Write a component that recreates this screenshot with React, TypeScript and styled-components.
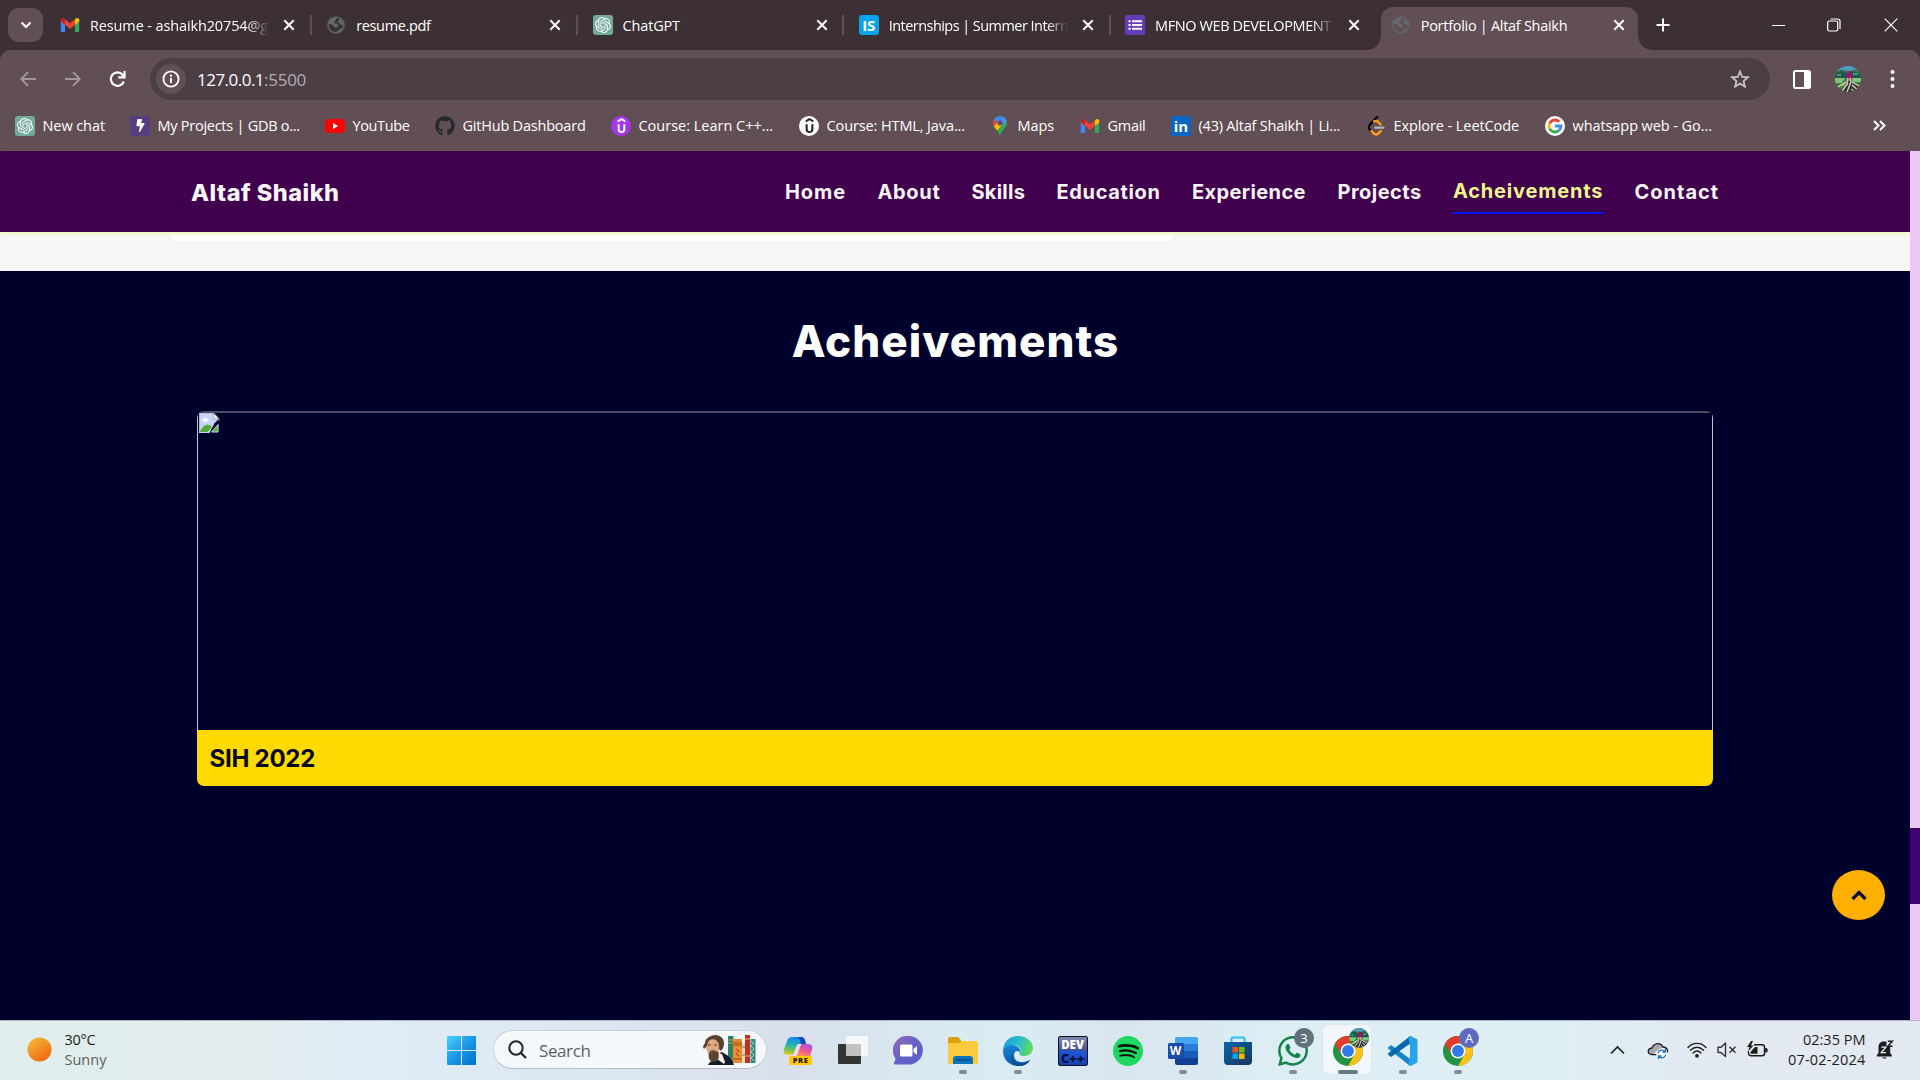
import React from "react";
import styled, { createGlobalStyle, css } from "styled-components";
import { SiOpenai, SiUdemy, SiSpotify } from "react-icons/si";
import { FaGithub, FaBolt, FaWhatsapp } from "react-icons/fa";

const GlobalStyle = createGlobalStyle`
  * { box-sizing: border-box; }
  html, body { margin: 0; padding: 0; }
  body { overflow: hidden; background: #00002c; }
  svg { display: block; flex: none; }
`;

const ui = `"Open Sans", "Noto Sans", sans-serif`;
const brand = `Inter, "Open Sans", sans-serif`;

const Screen = styled.div`
  width: 1920px;
  height: 1080px;
  display: flex;
  flex-direction: column;
  overflow: hidden;
  font-family: ${ui};
`;

const Label = styled.span<{ $ls?: number }>`
  letter-spacing: ${(p) => p.$ls ?? 0}px;
  white-space: nowrap;
`;

/* ---------- browser window ---------- */

const TabStrip = styled.div`
  height: 50px;
  flex: none;
  display: flex;
  align-items: flex-start;
  padding-left: 8px;
  background: #3c3034;
  color: #fff;
`;

const TabSearch = styled.button`
  width: 35px;
  height: 34px;
  margin: 8px 2.5px 0 0;
  padding: 0;
  border: 0;
  border-radius: 11px;
  background: #624f55;
  display: grid;
  place-items: center;
`;

const Tab = styled.div<{ $active?: boolean; $last?: boolean }>`
  width: 266.25px;
  height: 50px;
  flex: none;
  display: flex;
  align-items: center;
  position: relative;
  padding-left: 14.5px;
  font-size: 14.5px;
  border-right: 2px solid transparent;
  ${(p) =>
    !p.$active &&
    !p.$last &&
    css`
      background: linear-gradient(#624f55, #624f55) no-repeat right -2px center / 2px 20px;
      background-origin: padding-box;
    `}
  ${(p) =>
    p.$active &&
    css`
      width: 257px;
      height: 43px;
      margin: 7px 0 0 4px;
      padding: 0 0 7px 10px;
      border: 0;
      border-radius: 12px 12px 0 0;
      background: #624f55;
      &::before,
      &::after {
        content: "";
        position: absolute;
        bottom: 0;
        width: 14px;
        height: 14px;
      }
      &::before {
        left: -14px;
        background: radial-gradient(circle at 0 0, transparent 13.5px, #624f55 14px);
      }
      &::after {
        right: -14px;
        background: radial-gradient(circle at 100% 0, transparent 13.5px, #624f55 14px);
      }
    `}
`;

const TabTitle = styled.div<{ $fade?: boolean; $active?: boolean }>`
  width: ${(p) => (p.$active ? 190 : 179)}px;
  margin: 0 ${(p) => (p.$active ? 0 : 12)}px 0 10px;
  padding-top: 1px;
  line-height: 24px;
  white-space: nowrap;
  ${(p) => p.$fade && css`mask-image: linear-gradient(90deg, #000 158px, transparent 179px);`}
`;

const NewTab = styled.div`
  width: 25px;
  height: 50px;
  margin-left: 13px;
  display: grid;
  place-items: center;
`;

const WindowControls = styled.div`
  margin-left: auto;
  height: 50px;
  display: flex;
`;

const ControlButton = styled.div<{ $w?: number }>`
  width: ${(p) => p.$w ?? 56}px;
  display: grid;
  place-items: center;
`;

const ToolbarBack = styled.div`
  background: #3c3034;
  flex: none;
`;

const Toolbar = styled.div`
  height: 101px;
  border-radius: 10px 10px 0 0;
  background: #624f55;
  color: #fff;
`;

const AddressRow = styled.div`
  height: 58px;
  padding-top: 8px;
  display: flex;
`;

const NavButton = styled.div<{ $w: number }>`
  width: ${(p) => p.$w}px;
  height: 42px;
  flex: none;
  display: grid;
  place-items: center;
`;

const Omnibox = styled.div`
  width: 1620px;
  height: 42px;
  flex: none;
  margin-left: 5px;
  border-radius: 21px;
  background: #4c3e45;
  display: flex;
  align-items: center;
  padding: 0 20px 0 6px;
  font-size: 17px;
`;

const InfoBadge = styled.div`
  width: 30px;
  height: 30px;
  margin-right: 11px;
  border-radius: 50%;
  background: #624f55;
  display: grid;
  place-items: center;
`;

const Port = styled(Label)`
  color: #b5abb0;
`;

const Push = styled.div`
  flex: 1;
`;

const BookmarksBar = styled.div`
  height: 43px;
  display: flex;
  align-items: center;
  padding: 0 0 8px 15px;
  font-size: 14.5px;
`;

const Bookmark = styled.div<{ $w: number }>`
  width: ${(p) => p.$w}px;
  flex: none;
  display: flex;
  align-items: center;
  gap: 7.5px;
`;

const Tile = styled.span<{ $bg: string; $fg?: string; $r?: number; $size?: number }>`
  width: 20px;
  height: 20px;
  flex: none;
  border-radius: ${(p) => p.$r ?? 0}px;
  background: ${(p) => p.$bg};
  color: ${(p) => p.$fg ?? "#fff"};
  display: grid;
  place-items: center;
  font: 700 ${(p) => p.$size ?? 14}px/20px ${ui};
`;

/* ---------- portfolio page ---------- */

const Viewport = styled.div`
  height: 869px;
  flex: none;
  display: flex;
`;

const Page = styled.div`
  width: 1910px;
  display: flex;
  flex-direction: column;
  background: #00002c;
`;

const ScrollTrack = styled.div`
  width: 10px;
  padding-top: 677px;
  position: relative;
  background: #ecc8f4;
`;

const ScrollThumb = styled.div`
  height: 76px;
  background: #420075;
`;

const SiteHeader = styled.header`
  height: 81px;
  flex: none;
  display: flex;
  justify-content: space-between;
  align-items: center;
  padding: 0 191px;
  position: relative;
  background: #40004d;
  box-shadow: 0 3px 4px -1px #eff7b8;
  color: #fbf6fb;
  font-family: ${brand};
`;

const Brand = styled.div`
  font-size: 23.5px;
  font-weight: 800;
  line-height: 30px;
  padding-top: 2px;
`;

const Menu = styled.nav`
  display: flex;
  gap: 31.5px;
`;

const MenuLink = styled.a<{ $w: number; $ls: number; $active?: boolean }>`
  width: ${(p) => p.$w}px;
  height: 44px;
  font-size: 20px;
  font-weight: 700;
  line-height: 44px;
  letter-spacing: ${(p) => p.$ls}px;
  white-space: nowrap;
  ${(p) =>
    p.$active &&
    css`
      color: #f0f78e;
      line-height: 42px;
      border-bottom: 2px solid #0018ff;
    `}
`;

const PreviousSection = styled.div`
  height: 39px;
  flex: none;
  padding-left: 172px;
  background: #f7f7f7;
`;

const PreviousCard = styled.div`
  width: 1000px;
  height: 9px;
  background: #fff;
`;

const Section = styled.section`
  flex: 1;
  display: flex;
  flex-direction: column;
  align-items: center;
  position: relative;
  font-family: ${brand};
`;

const Heading = styled.h2`
  margin: 41px 0 0 1px;
  color: #fff;
  font-size: 44px;
  line-height: 58px;
  font-weight: 800;
  letter-spacing: 1.05px;
`;

const AwardCard = styled.article`
  width: 1516px;
  height: 375px;
  margin-top: 41px;
  border-radius: 7px;
  overflow: hidden;
  display: flex;
  flex-direction: column;
`;

const AwardImage = styled.div`
  height: 319px;
  padding-left: 1px;
  border: 1px solid #c4c4cc;
  border-top: 2px solid #4b4a67;
  border-bottom: 0;
  border-radius: 3px 3px 0 0;
`;

const AwardTitle = styled.div`
  height: 56px;
  padding-left: 12.5px;
  background: #ffd900;
  color: #060614;
  font-size: 24px;
  font-weight: 700;
  line-height: 57px;
`;

const BackToTop = styled.button`
  position: absolute;
  left: 1832px;
  top: 599px;
  width: 53px;
  height: 50px;
  border: 0;
  padding: 1px 0 0;
  border-radius: 50%;
  background: #ffaf00;
  display: grid;
  place-items: center;
`;

/* ---------- taskbar ---------- */

const Taskbar = styled.footer`
  height: 60px;
  flex: none;
  display: flex;
  border-top: 1px solid #b5b9c6;
  background: linear-gradient(90deg, #dfeeec 0, #e3ecec 220px, #e0ecf5 370px, #dde8f3 560px, #d8e0ec 790px, #d9e8f0 910px, #daedf3 1010px, #d9e5ef 1120px, #dceef4 1280px, #deeff4 1560px, #e2e9f1 1700px, #e3e9f1 100%);
  color: #1c1c1c;
`;

const Weather = styled.div`
  width: 440px;
  display: flex;
  align-items: center;
  padding: 0 0 2px 27px;
  gap: 12.5px;
`;

const TwoLines = styled.div<{ $right?: boolean }>`
  display: flex;
  flex-direction: column;
  align-items: ${(p) => (p.$right ? "flex-end" : "flex-start")};
  font-size: 14.5px;
  line-height: 20px;
`;

const Muted = styled(Label)`
  color: #5c6163;
`;

const StartButton = styled.div`
  width: 53px;
  padding: 15px 0 0 7px;
`;

const SearchBox = styled.div`
  width: 274px;
  height: 39px;
  flex: none;
  margin: 9px 3px 0 0;
  display: flex;
  align-items: center;
  padding: 0 10px 0 14px;
  border: 1px solid #c9d3e0;
  border-bottom-color: #b2bccb;
  border-radius: 20px;
  background: #f5f9fc;
  font-size: 17px;
`;

const SearchText = styled(Muted)`
  flex: 1;
  padding: 1px 0 0 12px;
`;

const AppButton = styled.div<{ $active?: boolean }>`
  width: 55px;
  height: 59px;
  flex: none;
  display: flex;
  flex-direction: column;
  align-items: center;
  padding-top: 15px;
  position: relative;
  &::before {
    content: "";
    position: absolute;
    left: 3px;
    top: 4px;
    width: 48px;
    height: 49px;
    border-radius: 5px;
    background: ${(p) => (p.$active ? "#f1f7fa" : "transparent")};
    box-shadow: ${(p) => (p.$active ? "0 0 1px #b9c4cc" : "none")};
  }
  > svg { position: relative; }
`;

const RunDot = styled.span<{ $wide?: boolean }>`
  width: ${(p) => (p.$wide ? 20 : 8)}px;
  height: 4px;
  margin-top: 4px;
  border-radius: 2px;
  position: relative;
  background: ${(p) => (p.$wide ? "#667a86" : "#858b91")};
`;

const CountBadge = styled.span<{ $bg: string }>`
  position: absolute;
  left: 29px;
  top: 7px;
  width: 20px;
  height: 20px;
  border-radius: 50%;
  background: ${(p) => p.$bg};
  color: #fff;
  font-size: 13px;
  line-height: 20px;
  text-align: center;
  overflow: hidden;
`;

const PreTag = styled.span`
  position: absolute;
  left: 19px;
  top: 35px;
  width: 23px;
  height: 9px;
  border-radius: 2px;
  background: #ffc800;
  color: #1b1400;
  font-size: 7.5px;
  font-weight: 800;
  line-height: 9px;
  letter-spacing: 0.6px;
  text-align: center;
`;

const DevTile = styled.div`
  width: 30px;
  height: 30px;
  border: 1.5px solid #10131f;
  border-radius: 2px;
  background: linear-gradient(#8388ad 0, #4c5592 45%, #1c57d8 52%, #173fae 100%);
  color: #fff;
  font-size: 11.5px;
  font-weight: 800;
  line-height: 15px;
  text-align: center;
  white-space: nowrap;
`;

const DevSub = styled.div`
  color: #04103a;
  font-size: 13px;
  line-height: 12px;
`;

const Tray = styled.div`
  margin-left: auto;
  width: 310px;
  display: flex;
  align-items: center;
  padding-bottom: 1px;
`;

const TraySlot = styled.div<{ $w: number }>`
  width: ${(p) => p.$w}px;
  flex: none;
`;

/* ---------- drawings ---------- */

const Gmail = () => (
  <svg width="20" height="20" viewBox="0 0 20 20">
    <path d="M.8 5v10.700q0 1.300 1.200 1.300H5V8z" fill="#4285f4" />
    <path d="M19.200 5v10.700q0 1.300-1.200 1.300h-3V8z" fill="#34a853" />
    <path d="M15 4.300 16.300 3.300c1.200-.9 2.900-.1 2.900 1.500V6.500L15 9.800z" fill="#fbbc04" />
    <path d="M5 4.300 3.700 3.300C2.500 2.400.8 3.200.8 4.800V6.500L5 9.800z" fill="#c5221f" />
    <path d="M5 4.300 10 8.200l5-3.900v5.500l-5 3.900-5-3.900z" fill="#ea4335" />
  </svg>
);

const Globe = () => (
  <svg width="20" height="20" viewBox="0 0 20 20">
    <circle cx="10" cy="10" r="8" fill="none" stroke="#5d6569" strokeWidth="1.700" />
    <path d="M2.500 8.500C4 4 7 2.500 10.500 2.500c1 1-.5 2-1 2.500.5 1-.5 1.500-1.500 2 0 1.500 1 1.500 2.500 1.500 1.500 0 2 1 1.500 2.500s-2 1.500-3 1.500-1-2-2.500-2.500S4 9 2.500 8.500zM13 4c2.500 1 4 3 4.300 6-1 .8-2 .5-2.500-.5S12.500 8 12 7s1-1 1-3zM11 17.500c0-2 1.500-2.500 3-3.500 1-.8 2-1 2.500-.5-1 2.500-3 4-5.500 4z" fill="#626a6e" />
  </svg>
);

const OpenAI = () => (
  <Tile $bg="#74aa9c" $r={3}>
    <SiOpenai size={16} />
  </Tile>
);

const FormsIcon = () => (
  <svg width="20" height="20" viewBox="0 0 20 20">
    <rect width="20" height="20" rx="1.500" fill="#673ab7" />
    <path d="M3.500 5.200h2.200v2H3.500zM3.500 9h2.200v2H3.500zM3.500 12.800h2.200v2H3.500zM7 5.200h10v2H7zM7 9h10v2H7zM7 12.800h10v2H7z" fill="#fff" />
  </svg>
);

const Cross = () => (
  <svg width="16" height="16" viewBox="0 0 16 16">
    <path d="m3.300 3.300 9.400 9.400m0-9.400-9.400 9.400" stroke="#fff" strokeWidth="2" />
  </svg>
);

const YouTube = () => (
  <svg width="20" height="20" viewBox="0 0 20 20">
    <rect y="3" width="20" height="14" rx="3.500" fill="#f00" />
    <path d="m8 7 5.200 3L8 13z" fill="#fff" />
  </svg>
);

const MapsPin = () => (
  <svg width="20" height="20" viewBox="0 0 20 20">
    <defs>
      <clipPath id="pin">
        <path d="M10 0a7 7 0 0 0-7 7c0 5 5.500 6.500 7 13 1.500-6.500 7-8 7-13a7 7 0 0 0-7-7z" />
      </clipPath>
    </defs>
    <g clipPath="url(#pin)">
      <path d="M0 0h20v20H0z" fill="#34a853" />
      <path d="M3 14 17-2 5-2 2 9z" fill="#4285f4" />
      <path d="M2 2 8 7 3 12z" fill="#ea4335" />
      <path d="M3 11 8 6l4 3-6 7z" fill="#fbbc04" />
      <path d="m10 7 4-6 4 3-6 6z" fill="#4c8df6" />
    </g>
    <circle cx="10" cy="7" r="2.500" fill="#624f55" />
  </svg>
);

const LeetCode = () => (
  <svg width="20" height="20" viewBox="0 0 24 24">
    <path d="M13.500 1 5 10c-2 2-2 5 0 7l2 2.200" fill="none" stroke="#050505" strokeWidth="2.800" strokeLinecap="round" />
    <path d="m17.500 10-3-3c-1.300-1.200-3.200-1.400-4.700-.6M6.500 18l2.500 2.800c1.700 1.800 4.500 1.800 6 0l2.800-2.800" fill="none" stroke="#ffa116" strokeWidth="2.800" strokeLinecap="round" />
    <path d="M11 14h10" stroke="#b3b3b3" strokeWidth="2.600" strokeLinecap="round" />
  </svg>
);

const GoogleG = () => (
  <svg width="20" height="20" viewBox="0 0 20 20">
    <circle cx="10" cy="10" r="10" fill="#fff" />
    <g fill="none" strokeWidth="2.800">
      <path d="M14.200 5.800A6 6 0 0 0 4.600 7.300" stroke="#ea4335" />
      <path d="M4.600 7.300a6 6 0 0 0 0 5.400" stroke="#fbbc05" />
      <path d="M4.600 12.700a6 6 0 0 0 9.200 1.900" stroke="#34a853" />
      <path d="M13.800 14.600A6 6 0 0 0 16 10h-6" stroke="#4285f4" />
    </g>
  </svg>
);

const Avatar = ({ size }: { size: number }) => (
  <svg width={size} height={size} viewBox="0 0 26 26">
    <defs>
      <clipPath id={`av${size}`}>
        <circle cx="13" cy="13" r="13" />
      </clipPath>
    </defs>
    <g clipPath={`url(#av${size})`}>
      <path d="M0 0h26v26H0z" fill="#3f7d4c" />
      <path d="M0 0h26v5l-6-2-5 3-6-2-9 3z" fill="#4a9cc0" />
      <path d="m0 7 6-3 5 3 6-2 9 2v5H0z" fill="#1d5a49" />
      <path d="M2 8h4v2H2zM18 7h5v2h-5z" fill="#3f9a86" />
      <path d="M0 12h10l-3 5H0zM17 12h9v4h-8z" fill="#7dc878" />
      <path d="M4 26 14 15l12 5v6z" fill="#3a3436" />
      <path d="m3 21 8-5m-4 9 6-8m-1 9 4-10m8 4-7-4m7 9-7-6" stroke="#d6d9cb" strokeWidth="1.300" />
      <path d="m6 20 4-2m6 5 3 2" stroke="#c9c24a" strokeWidth="1.300" />
      <path d="M12.500 5h3l2 7.500h-6z" fill="#a3106f" />
      <path d="m13 12-1 5m3-5 1 4" stroke="#efb3b8" strokeWidth="1.500" />
    </g>
  </svg>
);

const BrokenImage = () => (
  <svg width="21" height="20" viewBox="0 0 22 21">
    <path d="M0 0h15l6 6-5 5-5 10H0z" fill="#c7d6f7" />
    <path d="M0 0h15l6 6v2M.5 20V.5" stroke="#aeb3c0" fill="none" />
    <path d="M15 0v6h6z" fill="#f7f8fc" stroke="#8f96a6" strokeWidth=".8" />
    <path d="M3.500 8c0-2 2-2 2.500-3 2-.5 3 .5 3 2 1.500 0 1.500 2 0 2h-4Q3.500 9 3.500 8z" fill="#fff" />
    <path d="M1 20c2-6 6-8 9-7.500 2 0 3 1 3.500 2.500L9 20z" fill="#56ad35" />
    <path d="m13 20 7-8v8z" fill="#63a94c" stroke="#d2d8e5" strokeWidth="1" />
  </svg>
);

const WindowsLogo = () => (
  <svg width="29" height="29" viewBox="0 0 29 29">
    <defs>
      <linearGradient id="win" gradientUnits="userSpaceOnUse" x1="0" y1="0" x2="29" y2="29">
        <stop stopColor="#4cd2ff" />
        <stop offset=".5" stopColor="#1a96e2" />
        <stop offset="1" stopColor="#006fd0" />
      </linearGradient>
    </defs>
    <path d="M1 0h13v14H0V1q0-1 1-1zM15 0h13q1 0 1 1v13H15zM0 15h14v14H1q-1 0-1-1zM15 15h14v13q0 1-1 1H15z" fill="url(#win)" />
  </svg>
);

const SearchArt = () => (
  <svg width="53" height="30" viewBox="0 0 53 30">
    <path d="M25 1h5.500v27H25z" fill="#2b8266" />
    <path d="M25 5h5.500M25 8h5.500M25 24h5.500" stroke="#c9b45c" strokeWidth=".8" />
    <path d="M30 4h9v24h-9z" fill="#ed8b34" />
    <path d="M30 8h9m-9 2h9m-9 14h9m-6-10 3 2-3 3 3 2" stroke="#a14d13" fill="none" />
    <path d="M39 8h3v20h-3z" fill="#eadaaf" />
    <path d="M39 12h3m-3 8h3" stroke="#4d8a5d" />
    <path d="M42 0h5v28h-5z" fill="#bd3027" />
    <path d="M42 4h5m-5 17h5" stroke="#e7b14b" />
    <path d="M47.500 4h5v24h-5z" fill="#2a8b8b" />
    <path d="m48 6 3 2-3 3 3 3-3 3 3 3-3 3 3 3" stroke="#d7c680" fill="none" />
    <path d="M5 30c1-3 4-4 6-5l7-8c6 2 11 6 13 13z" fill="#171b2a" />
    <path d="m15 18 4 1 3 8-1 2-7-5z" fill="#f3eee6" />
    <path d="M4 5c4-4 11-3 13 2l-1 12-5 3-6-3-2-6z" fill="#e0aa85" />
    <path d="M1 14C-1 11 1 10 2 8 2 3 8 0 13 0c5 .5 8 4 8 8 0 3-1 6-3 8l-2-2c0-4 0-6-2-8-2-2-5-2-7-1C4 7 5 11 3 12z" fill="#5b4230" />
    <path d="M6 18c2-2 6-2 9-1 2 5 0 10-4 10-5 0-6-5-5-9z" fill="#5a4330" />
    <path d="M5 10h3m3 0h3M7 16.500q3-1.500 6 0" stroke="#54392a" fill="none" strokeWidth="1.200" />
  </svg>
);

const Copilot = () => (
  <svg width="30" height="30" viewBox="0 0 30 30">
    <defs>
      <linearGradient id="cpa" x1=".5" y1="0" x2=".3" y2="1">
        <stop stopColor="#1387e6" />
        <stop offset=".45" stopColor="#25b1b5" />
        <stop offset=".75" stopColor="#75c34b" />
        <stop offset="1" stopColor="#f2cb20" />
      </linearGradient>
      <linearGradient id="cpb" x1=".8" y1="0" x2=".3" y2="1">
        <stop stopColor="#a657ee" />
        <stop offset=".5" stopColor="#e8558f" />
        <stop offset="1" stopColor="#ff9a4b" />
      </linearGradient>
    </defs>
    <path d="M9 1h9c3 0 4 2 5 7h-7c-3 0-4 7-6 11H5c-4 0-5-2-4-6L4 5q1.500-4 5-4z" fill="url(#cpa)" />
    <path d="M15 1h3c3 0 4 2 5 7h-5c-1-3-1-5-3-7z" fill="#1646c7" />
    <path d="M17 8h8c4 0 5 3 4 6l-2 6H11c3-2 3-12 6-12z" fill="url(#cpb)" />
    <path d="M16 8h3c-3 2-3 10-6 12h-3c3-3 3-12 6-12z" fill="#eadcf5" />
  </svg>
);

const TaskView = () => (
  <svg width="30" height="30" viewBox="0 0 30 30">
    <rect x="0" y="8" width="23" height="20" rx="1" fill="#343434" />
    <rect x="8" y="0" width="22" height="20" rx="1" fill="#f7f7f8" />
    <path d="M8 8h15v12H8z" fill="#bfc1c2" />
  </svg>
);

const Teams = () => (
  <svg width="30" height="30" viewBox="0 0 30 30">
    <defs>
      <linearGradient id="tm" x1="0" y1="0" x2="1" y2="1">
        <stop stopColor="#9a68b5" />
        <stop offset=".5" stopColor="#6661c5" />
        <stop offset="1" stopColor="#5a5dcc" />
      </linearGradient>
    </defs>
    <path d="M15 0a14.300 14.300 0 1 1-1 28.500H2q-2-.5-.5-2.500l1-3.500A14.300 14.300 0 0 1 15 0z" fill="url(#tm)" />
    <rect x="7" y="8.500" width="12.500" height="12" rx="1.500" fill="#fff" />
    <path d="m20.500 13 3.500-3v9l-3.500-3z" fill="#fff" />
  </svg>
);

const Explorer = () => (
  <svg width="30" height="30" viewBox="0 0 30 30">
    <path d="M0 3q0-2 2-2h8l3 3v6H0z" fill="#dca007" />
    <path d="M0 7h11l3-2h14q2 0 2 2v19q0 2-2 2H0z" fill="#fccb3d" />
    <path d="M5 28v-5q0-3 3-3h14q3 0 3 3v5z" fill="#0d73bd" />
    <path d="M8 24h14" stroke="#083f78" strokeWidth="1.200" />
  </svg>
);

const Edge = () => (
  <svg width="30" height="30" viewBox="0 0 30 30">
    <defs>
      <linearGradient id="eg1" x1="0" y1=".3" x2="1" y2=".5">
        <stop stopColor="#1b9fde" />
        <stop offset=".5" stopColor="#27bdca" />
        <stop offset="1" stopColor="#65dd55" />
      </linearGradient>
      <linearGradient id="eg2" x1="0" y1="0" x2="0" y2="1">
        <stop stopColor="#1684d7" />
        <stop offset="1" stopColor="#0b5ba7" />
      </linearGradient>
    </defs>
    <path d="M0 14C1 4 8 0 15 0c9 0 15 6 15 12 0 5-4 8-9 8-3 0-5-1-4.500-2.500C19 15 17 9 11 9 5 9 1 12 0 14z" fill="url(#eg1)" />
    <path d="M0 14c2-4 6-5.500 10-5 5 .5 8 4 7 7.500C13 12 9 18 12 23c3 4 9 4 15 1-4 6-9 6-13 6C5 29 0 23 0 14z" fill="url(#eg2)" />
    <path d="M12 13c-4 3-4 10 1 13.500 5 2 10 1 14.500-3-2 4-7 7-12.500 6.500C8 28 6 18 12 13z" fill="#0a4b8c" />
  </svg>
);

const Word = () => (
  <svg width="30" height="30" viewBox="0 0 30 30">
    <path d="M7 3q0-2 2-2h19q2 0 2 2v5H7z" fill="#43a6ee" />
    <path d="M7 8h23v7H7z" fill="#2b7cd8" />
    <path d="M7 15h23v7H7z" fill="#185abd" />
    <path d="M7 22h23v5q0 2-2 2H9q-2 0-2-2z" fill="#103f91" />
    <rect y="7" width="16" height="16" rx="1.500" fill="#174ba6" />
  </svg>
);

const WordLetter = styled.span`
  position: absolute;
  left: 13px;
  top: 22px;
  width: 15px;
  color: #fff;
  text-align: center;
  font-weight: 700;
  font-size: 12px;
  line-height: 16px;
`;

const Store = () => (
  <svg width="30" height="30" viewBox="0 0 30 30">
    <defs>
      <linearGradient id="st" x1="0" y1="0" x2="1" y2="1">
        <stop stopColor="#0764ad" />
        <stop offset="1" stopColor="#1c3558" />
      </linearGradient>
    </defs>
    <path d="M8.500 7V3q0-1.500 1.500-1.500h10q1.500 0 1.500 1.500v4" fill="none" stroke="#29bdf0" strokeWidth="2" />
    <path d="M1 6h28v19q0 4-4 4H5q-4 0-4-4z" fill="url(#st)" />
    <path d="M9.500 11H15v5.500H9.500z" fill="#f25022" />
    <path d="M16 11h5.500v5.500H16z" fill="#7fba00" />
    <path d="M9.500 17.500H15V23H9.500z" fill="#00a4ef" />
    <path d="M16 17.500h5.500V23H16z" fill="#ffb900" />
  </svg>
);

const Spotify = () => (
  <svg width="30" height="30" viewBox="0 0 30 30">
    <circle cx="15" cy="15" r="12" fill="#07140b" />
    <SiSpotify size={30} color="#1ed760" />
  </svg>
);

const Chrome = () => (
  <svg width="30" height="30" viewBox="2 2 44 44">
    <circle cx="24" cy="24" r="22" fill="#229342" />
    <path d="M24 2A22 22 0 0 0 4.950 13L14.500 29.500 24 13H43.050A22 22 0 0 0 24 2" fill="#e33b2e" />
    <path d="M43.050 13H24l9.500 16.500L24 46A22 22 0 0 0 43.050 13" fill="#fbc116" />
    <circle cx="24" cy="24" r="11" fill="#fff" />
    <circle cx="24" cy="24" r="8.700" fill="#2f7bea" />
  </svg>
);

const VSCode = () => (
  <svg width="30" height="30" viewBox="0 0 30 30">
    <path d="M0 11.500 3 9l20 14.500V30q-1 0-2-1L.5 13q-.8-.7-.5-1.500z" fill="#1485cd" />
    <path d="M0 18.500Q-.3 17.700.5 17L21 1q1-1 2-1v7L3 21z" fill="#0768ad" />
    <path d="m22.500 0 7 3.500v23l-7 3.500q-1.500 0-2.500-1.500l2-6V8l-2-6.500Q21 0 22.500 0z" fill="#27a3ec" />
  </svg>
);

const Cloud = () => (
  <svg width="22" height="20" viewBox="0 0 22 20">
    <path d="M5 14.500c-5 0-5-6 0-6.500 2-5.500 9-6 11-1 4 0 5 3 4.500 5.500-.5 1.500-1 2-2.500 2z" fill="#a7a9ab" stroke="#1c1c1c" strokeWidth="1.300" />
    <path d="M6 14 15 8c4 0 5 3 4 6z" fill="#f7f7f7" />
    <circle cx="15" cy="14" r="5.700" fill="#fff" />
    <path d="M11 13.500a4 4 0 0 1 7-2m.8 3a4 4 0 0 1-7 2M18.500 9v3h-3m-4 7v-3h3" fill="none" stroke="#1670c2" strokeWidth="1.300" />
  </svg>
);

const Wifi = () => (
  <svg width="20" height="18" viewBox="0 0 20 18" fill="none" stroke="#222" strokeWidth="1.400" strokeLinecap="round">
    <path d="M1 6.500c5-5.500 13-5.500 18 0M3.500 9.300c4-4 9-4 13 0M6 12c2.500-2.500 5.500-2.500 8 0" />
    <circle cx="10" cy="14.800" r="1.200" fill="#222" />
  </svg>
);

const Mute = () => (
  <svg width="20" height="18" viewBox="0 0 20 18" fill="none" stroke="#333" strokeWidth="1.400">
    <path d="M1 6.200h3L8.500 2v13.500L4 11.500H1zM12.500 5.800l6 6m0-6-6 6" strokeLinejoin="round" />
  </svg>
);

const Battery = () => (
  <svg width="21" height="18" viewBox="0 0 21 18">
    <path d="M7 3.700h8q2.500 0 2.500 2.500v6q0 2.500-2.500 2.500H4q-2.500 0-2.500-2.500v-2" fill="none" stroke="#1c1c1c" strokeWidth="1.400" />
    <path d="M3.500 12.700V11L8 6h2.500v6.700zM18.200 7h1.500q1 .7 1 2.200t-1 2.200h-1.500zM4 0 0 6h2.500L1 10.500 6.500 4.500H4L6 0z" fill="#1c1c1c" />
  </svg>
);

const Bell = () => (
  <svg width="18" height="20" viewBox="0 0 18 20">
    <path d="M8 1.500c-4 0-5.500 2.500-5.500 6V13L.8 15v1.500h15V15L14.200 13V7.500C14 3 12 1.500 8 1.500zM5.800 17.500h5q-2.500 2.500-5 0z" fill="#1c1c1c" />
    <path d="M5.300 7.200h4.600l-4.600 5.400h4.800" fill="none" stroke="#eef2f6" strokeWidth="1.300" />
    <path d="M10.500 0H18v7h-7.500z" fill="#e3e9f1" />
    <path d="M11.800 1.200h4.600l-4.600 5h4.800" fill="none" stroke="#1c1c1c" strokeWidth="1.500" />
  </svg>
);

/* ---------- data ---------- */

const tabs = [
  { title: "Resume - ashaikh20754@g", ls: -0.13, fade: true, icon: <Gmail /> },
  { title: "resume.pdf", ls: -0.37, icon: <Globe /> },
  { title: "ChatGPT", ls: -0.15, icon: <OpenAI /> },
  { title: "Internships | Summer Intern", ls: -0.55, fade: true, icon: <Tile $bg="#00a5ec" $r={3} $size={15}>IS</Tile> },
  { title: "MFNO WEB DEVELOPMENT", ls: -0.4, fade: true, icon: <FormsIcon /> },
];

const bookmarks = [
  { name: "New chat", w: 115, ls: -0.08, icon: <OpenAI /> },
  { name: "My Projects | GDB o...", w: 195, ls: -0.26, icon: <Tile $bg="#553d80"><FaBolt size={13} /></Tile> },
  { name: "YouTube", w: 110, ls: -0.37, icon: <YouTube /> },
  { name: "GitHub Dashboard", w: 176, ls: -0.21, icon: <FaGithub size={20} color="#24292e" /> },
  { name: "Course: Learn C++...", w: 188, ls: -0.01, icon: <Tile $bg="#a435f0" $r={10}><SiUdemy size={15} /></Tile> },
  { name: "Course: HTML, Java...", w: 191, ls: -0.11, icon: <Tile $bg="#fff" $fg="#1c1d1f" $r={10}><SiUdemy size={15} /></Tile> },
  { name: "Maps", w: 90, ls: -0.1, icon: <MapsPin /> },
  { name: "Gmail", w: 91, ls: -0.27, icon: <Gmail /> },
  { name: "(43) Altaf Shaikh | Li...", w: 195, ls: -0.21, icon: <Tile $bg="#0a66c2" $r={2} $size={15}>in</Tile> },
  { name: "Explore - LeetCode", w: 179, ls: -0.08, icon: <LeetCode /> },
  { name: "whatsapp web - Go...", w: 328, ls: -0.08, icon: <GoogleG /> },
];

const links = [
  { name: "Home", w: 61, ls: 0.9 },
  { name: "About", w: 62.5, ls: 0.66 },
  { name: "Skills", w: 53.5, ls: 0.25 },
  { name: "Education", w: 104, ls: 0.64 },
  { name: "Experience", w: 114, ls: 0.38 },
  { name: "Projects", w: 84, ls: 0.48 },
  { name: "Acheivements", w: 150, ls: 0.8, active: true },
  { name: "Contact", w: 84.5, ls: 1 },
];

export default function App() {
  return (
    <Screen>
      <GlobalStyle />
      <TabStrip>
        <TabSearch>
          <svg width="14" height="10" viewBox="0 0 14 10"><path d="m2.500 2.500 4.500 4.500 4.500-4.500" fill="none" stroke="#fff" strokeWidth="2.200" /></svg>
        </TabSearch>
        {tabs.map((t, i) => (
          <Tab key={t.title} $last={i === tabs.length - 1}>
            {t.icon}
            <TabTitle $fade={t.fade}><Label $ls={t.ls}>{t.title}</Label></TabTitle>
            <Cross />
          </Tab>
        ))}
        <Tab $active>
          <Globe />
          <TabTitle $active><Label $ls={-0.29}>Portfolio | Altaf Shaikh</Label></TabTitle>
          <Cross />
        </Tab>
        <NewTab>
          <svg width="14" height="14" viewBox="0 0 14 14"><path d="M7 .5v13M.5 7h13" stroke="#fff" strokeWidth="2" /></svg>
        </NewTab>
        <WindowControls>
          <ControlButton>
            <svg width="13" height="3"><path d="M0 1.500h13" stroke="#fff" /></svg>
          </ControlButton>
          <ControlButton>
            <svg width="14" height="14" viewBox="0 0 14 14" fill="none" stroke="#fff" strokeWidth="1.200"><rect x=".7" y="3" width="10" height="10" rx="1.500" /><path d="M3.500 1h7q2.500 0 2.500 2.500V11" /></svg>
          </ControlButton>
          <ControlButton $w={58}>
            <svg width="14" height="14" viewBox="0 0 14 14"><path d="m.7.7 12.600 12.600m0-12.600L.7 13.300" stroke="#fff" strokeWidth="1.200" /></svg>
          </ControlButton>
        </WindowControls>
      </TabStrip>

      <ToolbarBack>
        <Toolbar>
          <AddressRow>
            <NavButton $w={55}>
              <svg width="16" height="16" viewBox="0 0 16 16" fill="none" stroke="#a3979b" strokeWidth="1.900"><path d="M16 8H1.500M8 1.200 1.300 8 8 14.800" /></svg>
            </NavButton>
            <NavButton $w={35}>
              <svg width="16" height="16" viewBox="0 0 16 16" fill="none" stroke="#a3979b" strokeWidth="1.900"><path d="M0 8h14.500M8 1.200 14.700 8 8 14.800" /></svg>
            </NavButton>
            <NavButton $w={55}>
              <svg width="17" height="17" viewBox="0 0 17 17" fill="none" stroke="#fff" strokeWidth="2.200"><path d="M14.800 10.500a6.700 6.700 0 1 1-1.200-6.800l1.400 2" /><path d="M15.500 0v6.300H9.300" /></svg>
            </NavButton>
            <Omnibox>
              <InfoBadge>
                <svg width="18" height="18" viewBox="0 0 18 18"><circle cx="9" cy="9" r="7.600" fill="none" stroke="#fff" strokeWidth="1.900" /><path d="M8 8h2v5H8zM8 4.800h2v2H8z" fill="#fff" /></svg>
              </InfoBadge>
              <Label $ls={-0.52}>127.0.0.1</Label>
              <Port $ls={-0.27}>:5500</Port>
              <Push />
              <svg width="20" height="20" viewBox="0 0 20 20"><path d="m10 2.500 2.200 5.300 5.700.5-4.300 3.700 1.300 5.600-4.900-3-4.900 3 1.300-5.600L2.100 8.300l5.700-.5z" fill="none" stroke="#c9c3c6" strokeWidth="1.800" /></svg>
            </Omnibox>
            <NavButton $w={64}>
              <svg width="18" height="19" viewBox="0 0 18 19"><rect x="1" y="1" width="16" height="17" rx="1.500" fill="none" stroke="#fff" strokeWidth="2" /><path d="M11 1h6v17h-6z" fill="#fff" /></svg>
            </NavButton>
            <NavButton $w={28}><Avatar size={26} /></NavButton>
            <NavButton $w={60}>
              <svg width="5" height="18" viewBox="0 0 5 18" fill="#fff"><circle cx="2.500" cy="2" r="2" /><circle cx="2.500" cy="9" r="2" /><circle cx="2.500" cy="16" r="2" /></svg>
            </NavButton>
          </AddressRow>
          <BookmarksBar>
            {bookmarks.map((b) => (
              <Bookmark key={b.name} $w={b.w}>
                {b.icon}
                <Label $ls={b.ls}>{b.name}</Label>
              </Bookmark>
            ))}
            <svg width="13" height="11" viewBox="0 0 13 11" fill="none" stroke="#fff" strokeWidth="2"><path d="m1 1 4.500 4.500L1 10m6-9 4.500 4.500L7 10" /></svg>
          </BookmarksBar>
        </Toolbar>
      </ToolbarBack>

      <Viewport>
        <Page>
          <SiteHeader>
            <Brand><Label $ls={0.5}>Altaf Shaikh</Label></Brand>
            <Menu>
              {links.map((l) => (
                <MenuLink key={l.name} $w={l.w} $ls={l.ls} $active={l.active}>{l.name}</MenuLink>
              ))}
            </Menu>
          </SiteHeader>
          <PreviousSection><PreviousCard /></PreviousSection>
          <Section>
            <Heading>Acheivements</Heading>
            <AwardCard>
              <AwardImage><BrokenImage /></AwardImage>
              <AwardTitle><Label $ls={-0.26}>SIH 2022</Label></AwardTitle>
            </AwardCard>
            <BackToTop>
              <svg width="16" height="11" viewBox="0 0 16 11"><path d="m1.500 9 6.500-6.500L14.500 9" fill="none" stroke="#0a0a2c" strokeWidth="3.200" /></svg>
            </BackToTop>
          </Section>
        </Page>
        <ScrollTrack><ScrollThumb /></ScrollTrack>
      </Viewport>

      <Taskbar>
        <Weather>
          <svg width="25" height="25" viewBox="0 0 25 25">
            <defs><linearGradient id="sun" x1=".1" y1="0" x2=".8" y2="1"><stop stopColor="#efbd3a" /><stop offset="1" stopColor="#f1630b" /></linearGradient></defs>
            <circle cx="12.500" cy="12.500" r="12" fill="url(#sun)" />
          </svg>
          <TwoLines>
            <Label $ls={-0.23}>30°C</Label>
            <Muted>Sunny</Muted>
          </TwoLines>
        </Weather>
        <StartButton><WindowsLogo /></StartButton>
        <SearchBox>
          <svg width="19" height="19" viewBox="0 0 19 19"><circle cx="8" cy="8" r="6.700" fill="none" stroke="#222" strokeWidth="2" /><path d="m12.700 12.700 5.300 5.300" stroke="#222" strokeWidth="2.200" /></svg>
          <SearchText $ls={-0.4}>Search</SearchText>
          <SearchArt />
        </SearchBox>
        <AppButton><Copilot /><PreTag>PRE</PreTag></AppButton>
        <AppButton><TaskView /></AppButton>
        <AppButton><Teams /></AppButton>
        <AppButton><Explorer /><RunDot /></AppButton>
        <AppButton><Edge /><RunDot /></AppButton>
        <AppButton><DevTile>DEV<DevSub>C++</DevSub></DevTile></AppButton>
        <AppButton><Spotify /></AppButton>
        <AppButton><Word /><WordLetter>W</WordLetter><RunDot /></AppButton>
        <AppButton><Store /></AppButton>
        <AppButton><FaWhatsapp size={30} color="#16834c" viewBox="0 32 448 448" /><CountBadge $bg="#60717d">3</CountBadge><RunDot /></AppButton>
        <AppButton $active><Chrome /><CountBadge $bg="#3f7d4c"><Avatar size={20} /></CountBadge><RunDot $wide /></AppButton>
        <AppButton><VSCode /><RunDot /></AppButton>
        <AppButton><Chrome /><CountBadge $bg="#5c6bc0">A</CountBadge><RunDot /></AppButton>
        <Tray>
          <TraySlot $w={37}>
            <svg width="15" height="10" viewBox="0 0 15 10"><path d="m1 8.500 6.500-6.500L14 8.500" fill="none" stroke="#1c1c1c" strokeWidth="1.600" /></svg>
          </TraySlot>
          <TraySlot $w={40}><Cloud /></TraySlot>
          <TraySlot $w={30}><Wifi /></TraySlot>
          <TraySlot $w={30}><Mute /></TraySlot>
          <TraySlot $w={41}><Battery /></TraySlot>
          <TwoLines $right>
            <Label>02:35 PM</Label>
            <Label $ls={0.18}>07-02-2024</Label>
          </TwoLines>
          <TraySlot $w={11} />
          <TraySlot $w={20}><Bell /></TraySlot>
        </Tray>
      </Taskbar>
    </Screen>
  );
}
